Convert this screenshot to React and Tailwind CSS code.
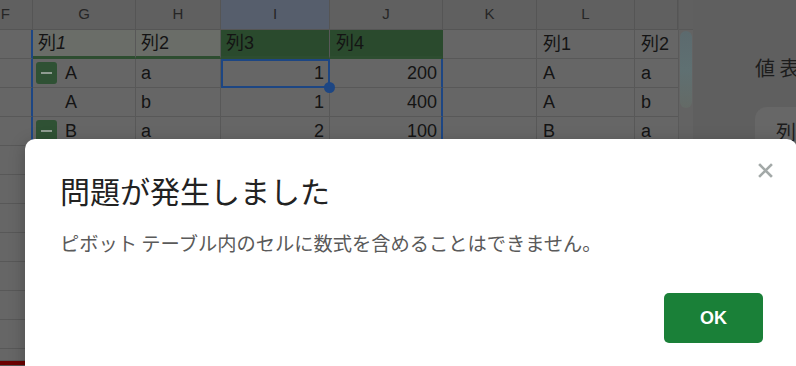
import React from 'react';

const font = { fontFamily: '"Liberation Sans", "Noto Sans CJK JP", sans-serif' };
const jp = { fontFamily: '"Noto Sans CJK JP", "Liberation Sans", sans-serif' };

const MinusBox = () => (
    <span className="ml-[3px] mr-[8px] flex h-[22px] w-[21px] items-center justify-center rounded-[3px] bg-[#2f5134]">
        <span className="h-[2px] w-[11px] bg-[#8f9c91]"></span>
    </span>
);

const rows = [
    { g: <span>列<i>1</i></span>, h: '列2', i: '列3', j: '列4', l: '列1', m: '列2', head: true },
    { g: 'A', gMinus: true, h: 'a', i: '1', j: '200', l: 'A', m: 'a', selected: true },
    { g: 'A', h: 'b', i: '1', j: '400', l: 'A', m: 'b' },
    { g: 'B', gMinus: true, h: 'a', i: '2', j: '100', l: 'B', m: 'a' },
    {}, {}, {}, {}, {}, {}, {}, {},
];

const cell = 'h-[29px] flex items-center border-b border-r border-[#585858] text-[18px] text-[#141414] whitespace-nowrap';

export default function App() {
    return (
        <div className="relative h-[366px] w-[796px] overflow-hidden bg-[#666666]" style={font}>
            <div className="flex h-[366px]">
                {/* sheet */}
                <div className="flex w-[678px] shrink-0 flex-col">
                    <div className="h-[360px] overflow-hidden">
                        <div className="grid grid-cols-[33px_103px_85px_109px_113px_94px_98px_43px]">
                            {['F', 'G', 'H', 'I', 'J', 'K', 'L', ''].map((c, idx) => (
                                <div
                                    key={c + idx}
                                    className={`h-[30px] flex items-center border-b border-r border-[#555555] text-[15px] text-[#262626] ${idx === 0 ? 'justify-end pr-[22px]' : 'justify-center'} ${c === 'I' ? 'bg-[#565e6c]' : 'bg-[#606060]'}`}
                                >
                                    {c}
                                </div>
                            ))}
                            {rows.map((r, ri) => {
                                const inPivot = ri < 4;
                                const gPad = r.gMinus ? '' : r.head ? 'pl-[5px]' : 'pl-[32px]';
                                return (
                                    <React.Fragment key={ri}>
                                        <div className={`${cell} border-r-2 border-r-[#1d4683]`}></div>
                                        <div className={`${cell} ${gPad} ${r.head ? 'bg-[#6a6d68] border-b-[3px] border-b-[#2d4d30]' : ''}`}>
                                            {r.gMinus && <MinusBox />}
                                            {r.g}
                                        </div>
                                        <div className={`${cell} pl-[5px] ${r.head ? 'bg-[#6a6d68] border-b-[3px] border-b-[#2d4d30]' : ''}`}>{r.h}</div>
                                        <div className={`${cell} relative ${r.head ? 'bg-[#2a4a2d] border-[#2a4a2d] border-b-[3px] border-b-[#2d4d30] pl-[5px] text-[#858a85]' : 'justify-end pr-[5px]'}`}>
                                            {r.i}
                                            {r.selected && (
                                                <>
                                                    <span className="absolute inset-0 -right-px -bottom-px border-2 border-[#1d4683]"></span>
                                                    <span className="absolute -right-[6px] -bottom-[6px] z-10 h-[11px] w-[11px] rounded-full bg-[#1d4683]"></span>
                                                </>
                                            )}
                                        </div>
                                        <div className={`${cell} ${r.head ? 'bg-[#2a4a2d] border-r-[#2a4a2d] border-b-[3px] border-b-[#2d4d30] pl-[6px] text-[#858a85]' : `justify-end pr-[4px] ${inPivot ? 'border-r-2 border-r-[#1d4683]' : ''}`}`}>
                                            {r.j}
                                        </div>
                                        <div className={cell}></div>
                                        <div className={`${cell} pl-[6px]`}>{r.l}</div>
                                        <div className={`${cell} pl-[6px] border-r-0 overflow-hidden`}>{r.m}</div>
                                    </React.Fragment>
                                );
                            })}
                        </div>
                    </div>
                    <div className="flex h-[6px] flex-col bg-[#585858]">
                        <div className="h-px"></div>
                        <div className="h-[4px] w-[200px] bg-[#6b0000]"></div>
                    </div>
                </div>

                {/* scrollbar */}
                <div className="flex w-[15px] shrink-0 flex-col border-l border-[#5a5a5a] bg-[#636363]">
                    <div className="h-[30px] border-b border-[#585858] bg-[#606060]"></div>
                    <div className="mx-[1px] mt-[1px] h-[77px] rounded-full bg-gradient-to-b from-[#5c6a6e] via-[#5f7072] to-[#646a66]"></div>
                </div>

                {/* side panel */}
                <div className="flex min-w-0 flex-1 flex-col overflow-hidden bg-[#5f5f5f] pl-[62px]" style={jp}>
                    <div className="mt-[55px] whitespace-nowrap text-[20px] leading-[26px] text-[#1c1c1c]">値 表</div>
                    <div className="mt-[26px] h-[60px] w-[60px] shrink-0 rounded-l-[12px] bg-[#676767] pl-[21px] pt-[10px] text-[20px] text-[#1c1c1c]">列</div>
                </div>
            </div>

            {/* dialog */}
            <div className="absolute left-[25px] top-[139px] flex h-[240px] w-[772px] flex-col rounded-[10px] bg-white pl-[35px] pr-[34px] pt-[33px] shadow-[0_4px_16px_rgba(0,0,0,0.25)]" style={jp}>
                <svg className="absolute left-[733px] top-[24px]" width="15" height="15" viewBox="0 0 15 15">
                    <path d="M2 2 L13 13 M13 2 L2 13" stroke="#a3a9a8" strokeWidth="2.6" strokeLinecap="square" />
                </svg>
                <h2 className="text-[30px] font-normal leading-[36px] text-[#222222]">問題が発生しました</h2>
                <p className="mt-[23px] text-[19.25px] leading-[24px] text-[#5a5a5a]">ピボット テーブル内のセルに数式を含めることはできません。</p>
                <div className="mt-[38px] flex justify-end">
                    <button className="h-[50px] w-[99px] rounded-[5px] bg-[#1a8038] text-[18px] font-bold text-white" style={font}>OK</button>
                </div>
            </div>
        </div>
    );
}
